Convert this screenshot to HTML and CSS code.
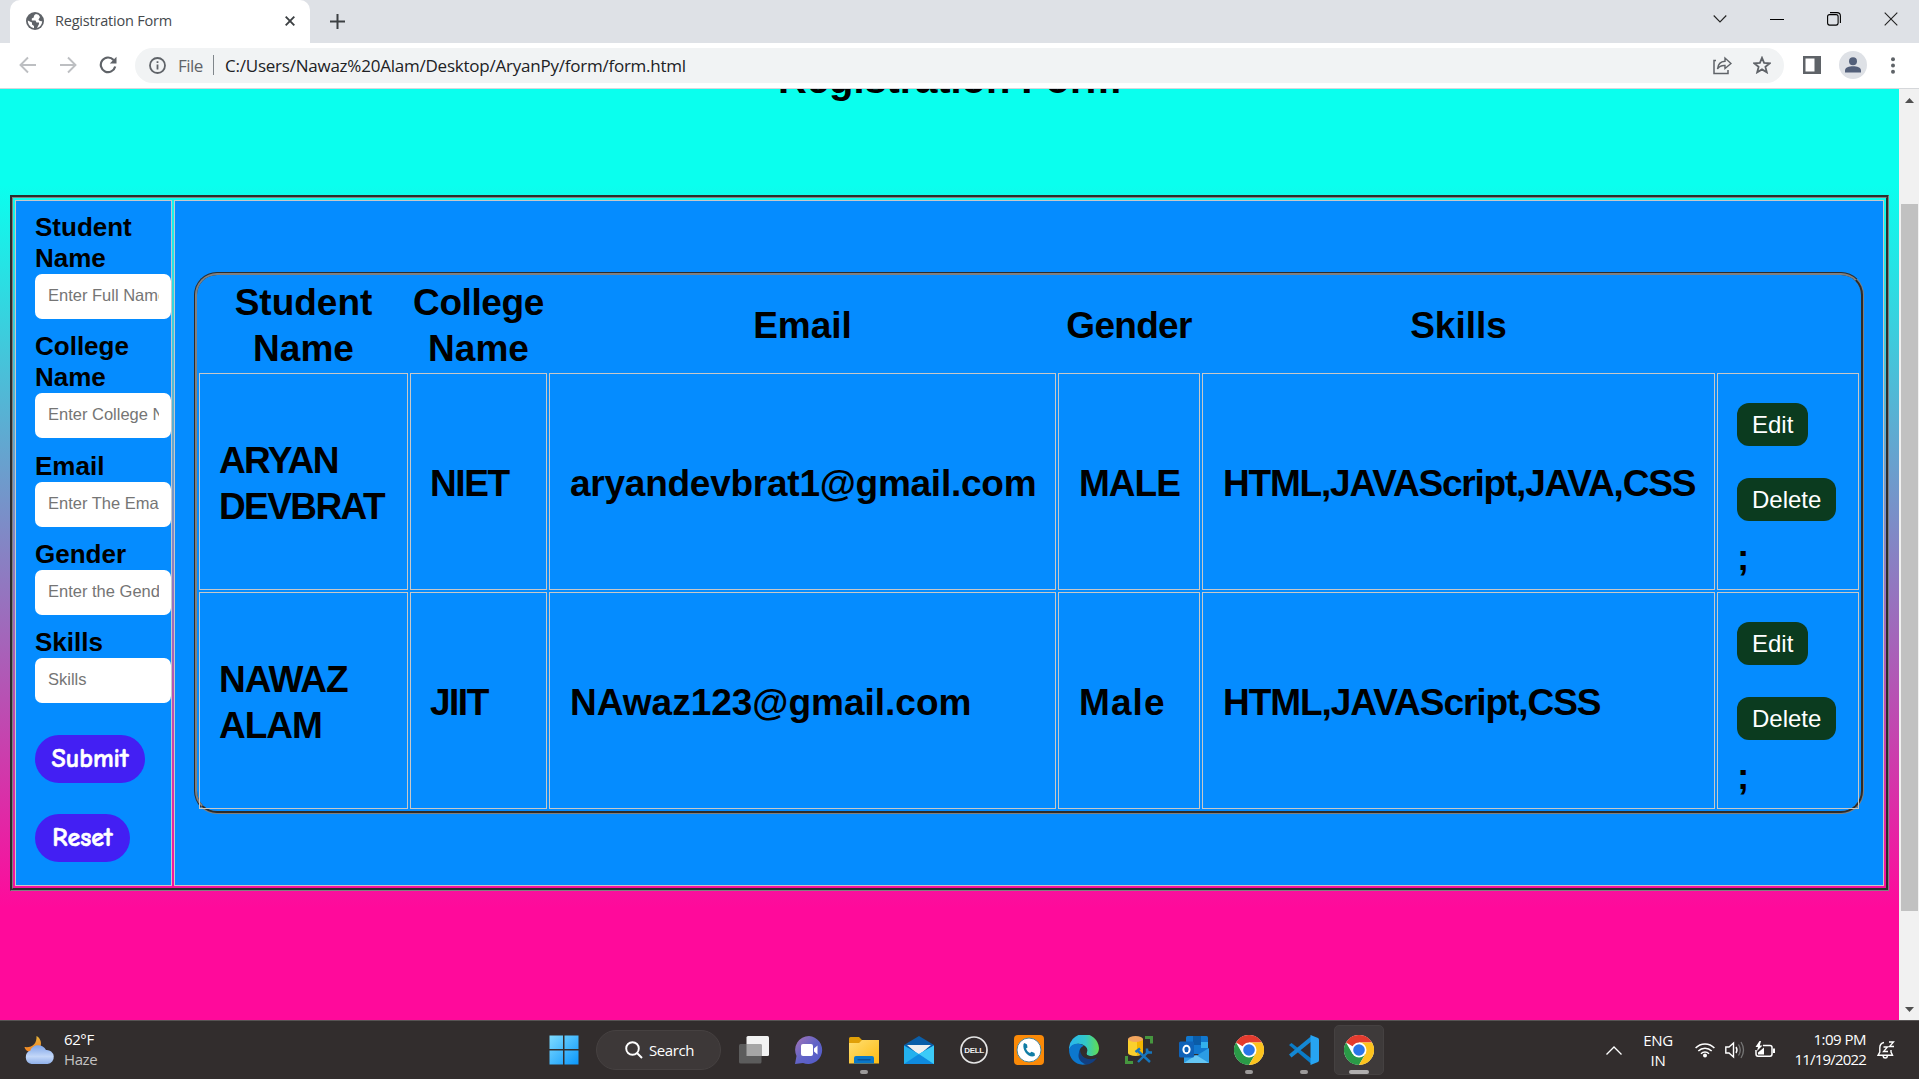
FILE: index.html
```html
<!DOCTYPE html>
<html lang="en">
<head>
<meta charset="utf-8">
<title>Registration Form</title>
<link rel="stylesheet" href="styles.css">
</head>
<body>
<svg width="0" height="0" class="defs">
  <defs>
    <linearGradient id="win" x1="0" y1="0" x2="1" y2="1"><stop offset="0" stop-color="#7fdcff"/><stop offset="1" stop-color="#0a96fb"/></linearGradient>
    <linearGradient id="edgeA" x1="0" y1="0" x2="1" y2="0"><stop offset="0" stop-color="#28b5f0"/><stop offset=".55" stop-color="#32c8c8"/><stop offset="1" stop-color="#62dd4f"/></linearGradient>
    <linearGradient id="chat" x1="0" y1="0" x2="1" y2="1"><stop offset="0" stop-color="#a774b4"/><stop offset=".5" stop-color="#6264c7"/><stop offset="1" stop-color="#5059c9"/></linearGradient>
    <linearGradient id="fold" x1="0" y1="0" x2="1" y2="1"><stop offset="0" stop-color="#ffdf72"/><stop offset="1" stop-color="#fdbb12"/></linearGradient>
    <linearGradient id="cloud" x1="0" y1="0" x2="0" y2="1"><stop offset="0" stop-color="#7ea4e8"/><stop offset=".6" stop-color="#c3d7f8"/><stop offset="1" stop-color="#8fb0ea"/></linearGradient>
    <linearGradient id="moon" x1="0" y1="0" x2="0" y2="1"><stop offset="0" stop-color="#e8b43a"/><stop offset="1" stop-color="#f58220"/></linearGradient>
    <symbol id="chrome" viewBox="0 0 30 30">
      <circle cx="15" cy="15" r="15" fill="#fff"/>
      <path d="M15 15L2 7.5A15 15 0 0 1 28 7.5H15Z" fill="#e33b2e"/>
      <path d="M2 7.5A15 15 0 0 0 15 30L21.5 18.7L15 15L8.5 18.7Z" fill="#2a9a47"/>
      <path d="M28 7.5A15 15 0 0 1 15 30L21.5 18.7L19 9L15 7.5Z" fill="#fcc31e"/>
      <circle cx="15" cy="15" r="7.5" fill="#fff"/><circle cx="15" cy="15" r="5.8" fill="#2a76e8"/>
    </symbol>
  </defs>
</svg>

<header class="tabstrip">
  <div class="tab">
    <svg class="globe" width="18" height="18" viewBox="0 0 18 18"><circle cx="9" cy="9" r="9" fill="#5f6368"/><path d="M10 1.9C8 3 7.5 4.200 8 5.200L5.800 6.500V8.500H9.500L10.500 10.500H13V12L11 16C14.500 15 16.200 12 16.200 9C15 9.500 13 9 12.500 7.500L14 5L12.500 2.800ZM1.800 8.600C1.800 12.500 4.500 15.600 8 16.200V14L6 12.500V10.500Z" fill="#fff"/></svg>
    <span class="tab-title">Registration Form</span>
    <svg class="tab-close" width="10" height="10" viewBox="0 0 10 10"><path d="M.7.7L9.300 9.300M9.300.7L.7 9.300" stroke="#3c4043" stroke-width="1.900"/></svg>
  </div>
  <svg class="new-tab" width="15" height="15" viewBox="0 0 15 15"><path d="M7.500 0V15M0 7.500H15" stroke="#3c4043" stroke-width="2"/></svg>
  <div class="window-controls">
    <svg width="14" height="14" viewBox="0 0 14 14"><path d="M.7 3.500L7 10L13.300 3.500" fill="none" stroke="#222" stroke-width="1.100"/></svg>
    <svg width="14" height="14" viewBox="0 0 14 14"><path d="M0 7.500H14" stroke="#000"/></svg>
    <svg width="14" height="14" viewBox="0 0 14 14"><rect x=".6" y="2.600" width="10.500" height="10.500" rx="2" fill="none" stroke="#000" stroke-width="1.100"/><path d="M3 .6H10Q13.400.6 13.400 4V11" fill="none" stroke="#000" stroke-width="1.100"/></svg>
    <svg width="14" height="14" viewBox="0 0 14 14"><path d="M.7.7L13.300 13.300M13.300.7L.7 13.300" stroke="#222" stroke-width="1.100"/></svg>
  </div>
</header>

<nav class="toolbar">
  <svg width="18" height="18" viewBox="0 0 18 18"><path d="M17 9H2M9 1.500L1.500 9L9 16.500" fill="none" stroke="#bdbfc2" stroke-width="1.900"/></svg>
  <svg width="18" height="18" viewBox="0 0 18 18"><path d="M1 9H16M9 1.500L16.500 9L9 16.500" fill="none" stroke="#bdbfc2" stroke-width="1.900"/></svg>
  <svg width="18" height="18" viewBox="0 0 18 18"><path d="M14.600 4A7.300 7.300 0 1 0 16.200 10.500" fill="none" stroke="#5f6368" stroke-width="2.200"/><path d="M17.500 .8V7.500H10.800Z" fill="#5f6368"/></svg>
  <div class="omnibox">
    <svg width="17" height="17" viewBox="0 0 17 17"><circle cx="8.500" cy="8.500" r="7.500" fill="none" stroke="#5f6368" stroke-width="1.800"/><path d="M8.500 7.500V12.500M8.500 4.300V6.100" stroke="#5f6368" stroke-width="1.800"/></svg>
    <span class="scheme">File</span>
    <span class="divider"></span>
    <span class="url">C:/Users/Nawaz%20Alam/Desktop/AryanPy/form/form.html</span>
    <svg class="share" width="19" height="19" viewBox="0 0 19 19"><path d="M3 4.500H1V17.500H15V14" fill="none" stroke="#5f6368" stroke-width="1.500"/><path d="M4.500 13C5 8 8 5.500 12 5.300V2L18 7.500L12 12.500V9.500C8.500 9.300 6 10.500 4.500 13Z" fill="none" stroke="#5f6368" stroke-width="1.400"/></svg>
    <svg width="18" height="18" viewBox="0 0 18 18"><path d="M9 1.800L11.100 6.900L16.700 7.300L12.400 10.900L13.800 16.300L9 13.400L4.200 16.300L5.600 10.900L1.300 7.300L6.900 6.900Z" fill="none" stroke="#5f6368" stroke-width="1.800"/></svg>
  </div>
  <svg class="panel-icon" width="18" height="18" viewBox="0 0 18 18"><path d="M0 0H18V18H0ZM2.500 2.500V15.500H11.500V2.500Z" fill="#5f6368" fill-rule="evenodd"/></svg>
  <svg class="avatar" width="28" height="28" viewBox="0 0 28 28"><circle cx="14" cy="14" r="14" fill="#dee1e6"/><circle cx="14" cy="10.300" r="4" fill="#53607a"/><path d="M6 21.500V19.500C6 16.500 10 15.200 14 15.200S22 16.500 22 19.500V21.500Z" fill="#53607a"/></svg>
  <svg class="menu" width="4" height="17" viewBox="0 0 4 17"><g fill="#5f6368"><circle cx="2" cy="2.200" r="2"/><circle cx="2" cy="8.500" r="2"/><circle cx="2" cy="14.800" r="2"/></g></svg>
</nav>

<div class="viewport">
  <main class="page">
    <h1>Registration Form</h1>
    <div class="layout">
      <form class="entry cell">
        <label>Student<br>Name</label><div class="input">Enter Full Name</div>
        <label>College<br>Name</label><div class="input">Enter College Name</div>
        <label>Email</label><div class="input">Enter The Email</div>
        <label>Gender</label><div class="input">Enter the Gender</div>
        <label>Skills</label><div class="input">Skills</div>
        <button type="button" class="pill submit">Submit</button>
        <button type="button" class="pill reset">Reset</button>
      </form>
      <section class="records cell">
        <div class="grid">
          <div class="head"><span>Student<br>Name</span></div>
          <div class="head"><span><span class="college">College</span><br>Name</span></div>
          <div class="head"><span>Email</span></div>
          <div class="head"><span class="gender">Gender</span></div>
          <div class="head"><span>Skills</span></div>
          <div class="head"></div>

          <div class="data"><span class="aryan">ARYAN<br>DEVBRAT</span></div>
          <div class="data"><span class="niet">NIET</span></div>
          <div class="data"><span class="mail1">aryandevbrat1@gmail.com</span></div>
          <div class="data"><span class="male1">MALE</span></div>
          <div class="data"><span class="skills1">HTML,JAVAScript,JAVA,CSS</span></div>
          <div class="data actions"><button type="button">Edit</button><button type="button">Delete</button><span>;</span></div>

          <div class="data"><span class="nawaz">NAWAZ<br>ALAM</span></div>
          <div class="data"><span class="jiit">JIIT</span></div>
          <div class="data"><span class="mail2">NAwaz123@gmail.com</span></div>
          <div class="data"><span class="male2">Male</span></div>
          <div class="data"><span class="skills2">HTML,JAVAScript,CSS</span></div>
          <div class="data actions"><button type="button">Edit</button><button type="button">Delete</button><span>;</span></div>
        </div>
      </section>
    </div>
  </main>
  <div class="scrollbar">
    <svg width="9" height="5" viewBox="0 0 9 5"><path d="M0 5L4.500 0L9 5Z" fill="#505050"/></svg>
    <div class="track"><div class="thumb"></div></div>
    <svg width="9" height="5" viewBox="0 0 9 5"><path d="M0 0L4.500 5L9 0Z" fill="#505050"/></svg>
  </div>
</div>

<footer class="taskbar">
  <div class="weather">
    <svg width="31" height="30" viewBox="0 0 31 30"><path d="M12.500 1C20 5 18 17 8 17C4 17 1 15 .5 12C8 13 13 9 12.500 1Z" fill="url(#moon)"/><path d="M7.500 29A7 7 0 0 1 6.500 15.500C8 9 19 8 22 15A7 7 0 0 1 23.500 29Z" fill="url(#cloud)"/></svg>
    <div class="weather-text"><span>62°F</span><span class="dim">Haze</span></div>
  </div>
  <div class="pinned">
    <div class="app"><svg width="30" height="30" viewBox="0 0 30 30"><path d="M.5.500H14V14H.5ZM15.500.500H29.500V14H15.500ZM.5 15.500H14V29.500H.5ZM15.500 15.500H29.500V29.500H15.500Z" fill="url(#win)"/></svg></div>
    <div class="search"><svg width="18" height="18" viewBox="0 0 18 18"><circle cx="7.500" cy="7.500" r="6.300" fill="none" stroke="#fff" stroke-width="1.900"/><path d="M12 12L17 17" stroke="#fff" stroke-width="2"/></svg><span>Search</span></div>
    <div class="app"><svg width="30" height="30" viewBox="0 0 30 30"><rect x="7.500" y="1" width="22.500" height="20" rx="1.500" fill="#f2f2f2"/><rect y="9" width="22.500" height="19.500" rx="1.500" fill="#5c5c5c"/><path d="M7.500 9H22.500V21H7.500Z" fill="#a6a6a6"/></svg></div>
    <div class="app"><svg width="30" height="30" viewBox="0 0 30 30"><path d="M15 1A14 14 0 1 1 9 28L1 29L2.500 21A14 14 0 0 1 15 1Z" fill="url(#chat)"/><rect x="7" y="9" width="12" height="12" rx="2" fill="#fff"/><path d="M20 13.500L23.500 10.500V19.500L20 16.500Z" fill="#fff"/></svg></div>
    <div class="app running"><svg width="30" height="30" viewBox="0 0 30 30"><path d="M0 3.500Q0 2 1.500 2H10L13 5H24V12H0Z" fill="#e0a008"/><path d="M0 8H10L13 5H30V28.500H0Z" fill="url(#fold)"/><path d="M5 28.500V23Q5 21 7 21H23Q25 21 25 23V28.500Z" fill="#0a78c8"/><path d="M8.500 24.800H21.500" stroke="#0b4c8c" stroke-width="1.200"/></svg></div>
    <div class="app"><svg width="30" height="30" viewBox="0 0 30 30"><path d="M0 10L15 1L30 10V20H0Z" fill="#0a5ea8"/><path d="M3 10H27L15 20Z" fill="#f0f0f0"/><path d="M0 10.500L15 19L30 10.500V29H0Z" fill="#23b1ee"/><path d="M0 29L15 19L30 29Z" fill="#0f8be0"/><path d="M15 19L30 10.500V29Z" fill="#3ccbf8"/></svg></div>
    <div class="app"><svg width="28" height="28" viewBox="0 0 28 28"><circle cx="14" cy="14" r="13" fill="none" stroke="#e6e6e6" stroke-width="1.700"/><text x="14" y="17.200" text-anchor="middle" class="dell">DELL</text></svg></div>
    <div class="app"><svg width="30" height="30" viewBox="0 0 30 30"><rect width="30" height="30" rx="4" fill="#fb8a08"/><circle cx="15" cy="15" r="12" fill="#fff" stroke="#4c8697"/><path d="M10.500 8L13 9.500L13.500 12.500L12 13.500C12.800 15.500 14 17 16 18L17.500 16.800L20.500 18L21 20.500C16.500 24 8 17 9.500 9Z" fill="#117da5"/></svg></div>
    <div class="app"><svg width="30" height="30" viewBox="0 0 30 30"><path d="M0 15A15 15 0 0 1 30 13C30 19 26 21 21.500 21C18 21 16.500 19 18 17C20 13 14 8 8 9C4 9.500 1 12 0 15Z" fill="url(#edgeA)"/><path d="M0 15C1 8 11 7 15 11C9 12 8 22 18 29C8 32 0 24 0 15Z" fill="#0c77ce"/><path d="M11 15C6 25 15 29 18 29.600C22 29 26 26 28 22.500C22 26 12 24 11 15Z" fill="#123f80"/><path d="M15 11C11 12.500 11 19 15 22C18 24 23 24.500 28 22.500C30 21 26 20.500 24 21C18 21.500 16.500 19 18 17C18.500 14 17 12 15 11Z" fill="#322d2d"/></svg></div>
    <div class="app"><svg width="30" height="30" viewBox="0 0 30 30"><path d="M4 4V18A7.500 3 0 0 0 19 18V4Z" fill="#fbd02d"/><path d="M13 5V20C17 20 19 19 19 17V4Z" fill="#f4b400"/><ellipse cx="11.500" cy="4" rx="7.500" ry="3" fill="#f3a65f"/><path d="M21 2.500H27.500V8.500M2.500 21V27.500H9" fill="none" stroke="#46963f" stroke-width="3"/><path d="M14 16L26 27M25 16L14 27" stroke="#1776bd" stroke-width="2.400"/><path d="M11.500 17L16 13.500M23 13.500V17.500H28" stroke="#1776bd" stroke-width="2.500" fill="none"/></svg></div>
    <div class="app"><svg width="30" height="30" viewBox="0 0 30 30"><rect x="7" y="1" width="22" height="18" rx="1.500" fill="#1178cf"/><path d="M14 1H22V10H14Z" fill="#0a5ca8"/><path d="M22 7H29V13H22Z" fill="#32b0ec"/><path d="M5 15L17 21L30 13V28H5Z" fill="#2b9ce4"/><path d="M5 28L17 20L30 28Z" fill="#65c6f4"/><rect y="6.500" width="15" height="16" rx="1.500" fill="#0f62b8"/><ellipse cx="7.500" cy="14.500" rx="3.100" ry="3.700" fill="none" stroke="#fff" stroke-width="2"/></svg></div>
    <div class="app running"><svg width="30" height="30"><use href="#chrome"/></svg></div>
    <div class="app running"><svg width="30" height="30" viewBox="0 0 30 30"><path d="M2.500 8L23 24V29.500L0 10Z" fill="#0a7cc8"/><path d="M2.500 22.500L23 6V.5L0 19.500Z" fill="#1488d4"/><path d="M21.500 0L29 3Q30 3.500 30 5V25Q30 26.500 29 27L21.500 30Z" fill="#27a4f2"/></svg></div>
    <div class="app running active"><svg width="30" height="30"><use href="#chrome"/></svg></div>
  </div>
  <div class="tray">
    <svg class="chev" width="16" height="9" viewBox="0 0 16 9"><path d="M.5 8.500L8 1L15.500 8.500" fill="none" stroke="#fff" stroke-width="1.300"/></svg>
    <div class="lang"><span>ENG</span><span>IN</span></div>
    <svg class="wifi" width="20" height="16" viewBox="0 0 20 16"><g fill="none" stroke="#fff" stroke-width="1.500"><path d="M.6 6A13 13 0 0 1 19.400 6M3.300 9A9.300 9.300 0 0 1 16.700 9M6 11.800A5.500 5.500 0 0 1 14 11.800"/></g><circle cx="10" cy="13.500" r="2" fill="#fff"/></svg>
    <svg class="sound" width="20" height="18" viewBox="0 0 20 18"><path d="M.8 6H4L8.500 2V16L4 12H.8Z" fill="none" stroke="#fff" stroke-width="1.400"/><path d="M11 6Q13 9 11 12" fill="none" stroke="#fff" stroke-width="1.400"/><path d="M13.500 3.500Q17 9 13.500 14.500M16 1Q21 9 16 17" fill="none" stroke="#777" stroke-width="1.300"/></svg>
    <svg class="battery" width="20" height="18" viewBox="0 0 20 18"><path d="M8 4.500H15Q17 4.500 17 6.500V13Q17 15.200 15 15.200H3Q1 15.200 1 13V9" fill="none" stroke="#fff" stroke-width="1.500"/><path d="M18 7.500H20V12H18ZM3 13.500V11.500L9 6.500V13.500ZM4.500 0L.5 6H3L2 10L7.500 4.500H4.800L6 0Z" fill="#fff"/></svg>
    <div class="clock"><span>1:09 PM</span><span class="date">11/19/2022</span></div>
    <svg class="bell" width="18" height="18" viewBox="0 0 18 18"><path d="M7 1.500C3.500 2 2.800 4.500 2.800 7V11L1 14.300H15.500L14 11V9M6 15C6.500 17.600 10 17.600 10.500 15" fill="none" stroke="#fff" stroke-width="1.400"/><path d="M6.500 6H10.500L6.500 10.500H11M12 1H16.500L12.500 5.500H17" fill="none" stroke="#fff" stroke-width="1.300"/></svg>
  </div>
</footer>
</body>
</html>
```
FILE: styles.css
```css
* { box-sizing: border-box; }
html, body { height: 100%; }
body {
  margin: 0;
  display: flex;
  flex-direction: column;
  overflow: hidden;
  font-family: "Segoe UI", "Open Sans", "Noto Sans", sans-serif;
}
.defs { position: absolute; }
svg { display: block; flex: none; }

/* Browser chrome */
.tabstrip {
  height: 43px;
  flex: none;
  display: flex;
  align-items: center;
  background: #dee1e6;
  padding-left: 10px;
}
.tab {
  width: 300px;
  height: 43px;
  display: flex;
  align-items: center;
  padding: 0 15px 2px 16px;
  background: #fff;
  border-radius: 10px 10px 0 0;
}
.tab-title { margin-left: 11px; flex: 1; font-size: 14.5px; color: #45494d; letter-spacing: -0.2px; white-space: nowrap; }
.new-tab { margin: -1px 0 0 20px; }
.window-controls { margin-left: auto; display: flex; gap: 43px; padding: 0 21px 6px 0; }
.toolbar {
  height: 46px;
  flex: none;
  display: flex;
  align-items: center;
  gap: 22px;
  padding: 0 24px 1px 19px;
  background: #fff;
  border-bottom: 1px solid #d5d7da;
}
.omnibox {
  flex: 1;
  height: 35px;
  margin-left: -4px;
  display: flex;
  align-items: center;
  padding: 0 13px 0 14px;
  background: #f1f3f4;
  border-radius: 18px;
  font-size: 17px;
  white-space: nowrap;
}
.scheme { margin-left: 12px; color: #5f6368; width: 27px; letter-spacing: -0.5px; }
.divider { width: 1px; height: 20px; margin: 0 11px 0 8px; background: #80868b; }
.url { color: #202124; letter-spacing: -0.23px; }
.share { margin: 0 21px 0 auto; }
.panel-icon { margin-left: -3px; }
.avatar { margin-left: -4px; }
.menu { margin-left: 2px; }

/* Web page */
.viewport { height: 931px; flex: none; display: flex; }
.page {
  width: 1899px;
  flex: none;
  overflow: hidden;
  padding: 0 10px;
  background: linear-gradient(#0affee 96px, #ff0a9b 819px);
  color: #000;
  font-family: "Liberation Sans", Arial, sans-serif;
}
h1 {
  height: 46px;
  margin: -33px 0 93px;
  font-size: 40px;
  line-height: 46px;
  text-align: center;
  letter-spacing: -0.1px;
}
.layout {
  width: 1879px;
  height: 696px;
  display: grid;
  grid-template-columns: 157px 1fr;
  gap: 2px;
  padding: 2px;
  border: 3px groove gray;
}
.cell { background: #058cff; border: 1px solid #c8c8c8; }
.entry { padding: 11px 0 0 19px; overflow: hidden; }
.entry label { display: block; font-weight: bold; font-size: 26px; line-height: 31px; }
.input {
  width: 136px;
  height: 45px;
  margin-bottom: 12.3px;
  overflow: hidden;
  background: #fff;
  border: solid #fff;
  border-width: 0 12px 0 13px;
  border-radius: 7px;
  color: #757575;
  font-size: 16.5px;
  line-height: 42px;
  white-space: nowrap;
}
.pill {
  display: block;
  height: 48px;
  border: 0;
  border-radius: 24px;
  padding: 0;
  background: #431ff3;
  color: #fff;
  font: bold 26px "Comic Sans MS", "Comic Neue", cursive;
  -webkit-text-stroke: 0.6px #fff;
}
.submit { width: 110px; margin-top: 32px; }
.reset { width: 95px; margin-top: 31px; }

.records { padding: 71px 0 0 19px; }
.grid {
  width: 1669px;
  height: 542px;
  display: grid;
  grid-template-columns: 209px 137px 507px 142px 513px 142px;
  grid-template-rows: 94px 217px 217px;
  gap: 2px;
  padding: 2px;
  border: 3px groove gray;
  border-radius: 23px;
  font-size: 37px;
  font-weight: bold;
  line-height: 46px;
  white-space: nowrap;
}
.grid { width: 1670px; }
.head { display: flex; align-items: center; justify-content: center; text-align: center; padding-top: 4px; }
.data { display: flex; align-items: center; padding: 5px 0 0 20px; border: 1px solid #c8c8c8; }
.college { letter-spacing: -0.4px; }
.gender { letter-spacing: -0.7px; }
.aryan { letter-spacing: -1.6px; margin-left: -1px; }
.nawaz { letter-spacing: -1px; margin-left: -1px; }
.niet { letter-spacing: -1.4px; margin-left: -1px; }
.jiit { letter-spacing: -1.5px; margin-left: -1px; }
.mail1 { letter-spacing: -0.25px; }
.mail2 { letter-spacing: 0; }
.male1 { letter-spacing: -1px; }
.male2 { letter-spacing: 1.1px; }
.skills1 { letter-spacing: -1.2px; }
.skills2 { letter-spacing: -1.05px; }
.actions { flex-direction: column; align-items: flex-start; justify-content: flex-start; padding: 29px 0 0 19px; }
.actions button {
  height: 43px;
  margin-bottom: 32px;
  padding: 0 15px;
  border: 0;
  border-radius: 12px;
  background: #0b3b1f;
  color: #fff;
  font: 24px/44px "Liberation Sans", Arial, sans-serif;
}
.actions span { margin-top: -18px; }

.scrollbar {
  width: 20px;
  display: flex;
  flex-direction: column;
  align-items: center;
  padding: 9px 0 8px;
  background: #f1f1f1;
}
.track { flex: 1; padding-top: 101px; }
.thumb { width: 17px; height: 707px; background: #c1c1c1; }

/* Taskbar */
.taskbar {
  height: 59px;
  flex: none;
  display: grid;
  grid-template-columns: 536px 1fr auto;
  background: #322d2d;
  border-top: 1px solid #585454;
  color: #fff;
  font-size: 15px;
}
.weather { display: flex; align-items: center; padding-left: 24px; gap: 9px; }
.weather-text { display: flex; flex-direction: column; line-height: 20px; letter-spacing: -0.4px; padding-bottom: 2px; }
.dim { color: #c4c2c2; }
.pinned { display: flex; align-items: center; }
.app {
  width: 50px;
  height: 50px;
  margin: 0 2.5px;
  display: flex;
  align-items: center;
  justify-content: center;
  position: relative;
  border-radius: 5px;
}
.search {
  width: 125px;
  height: 40px;
  margin: 0 5px;
  padding-left: 28px;
  display: flex;
  align-items: center;
  gap: 6px;
  background: #3d3838;
  border: 1px solid #464141;
  border-radius: 20px;
  letter-spacing: -0.4px;
}
.running::after {
  content: "";
  position: absolute;
  left: 21px;
  bottom: 1px;
  width: 8px;
  height: 4px;
  border-radius: 2px;
  background: #9c9a9a;
}
.active { background: #3e3a3a; border: 1px solid #454141; }
.active::after { left: 14px; bottom: 0; width: 20px; background: #b0aeae; }
.dell { font: bold 8px "Liberation Sans", sans-serif; fill: #eee; letter-spacing: -0.3px; }
.tray { display: flex; align-items: center; padding-right: 24px; }
.lang, .clock { display: flex; flex-direction: column; line-height: 20px; padding-bottom: 1px; }
.lang { margin-left: 21px; width: 30px; align-items: center; letter-spacing: -0.3px; }
.wifi { margin-left: 22px; }
.sound { margin-left: 10px; }
.battery { margin-left: 10px; }
.clock { margin-left: 14px; width: 77px; align-items: flex-end; letter-spacing: -0.5px; padding-bottom: 2px; }
.date { letter-spacing: -0.8px; }
.bell { margin-left: 11px; }
```
